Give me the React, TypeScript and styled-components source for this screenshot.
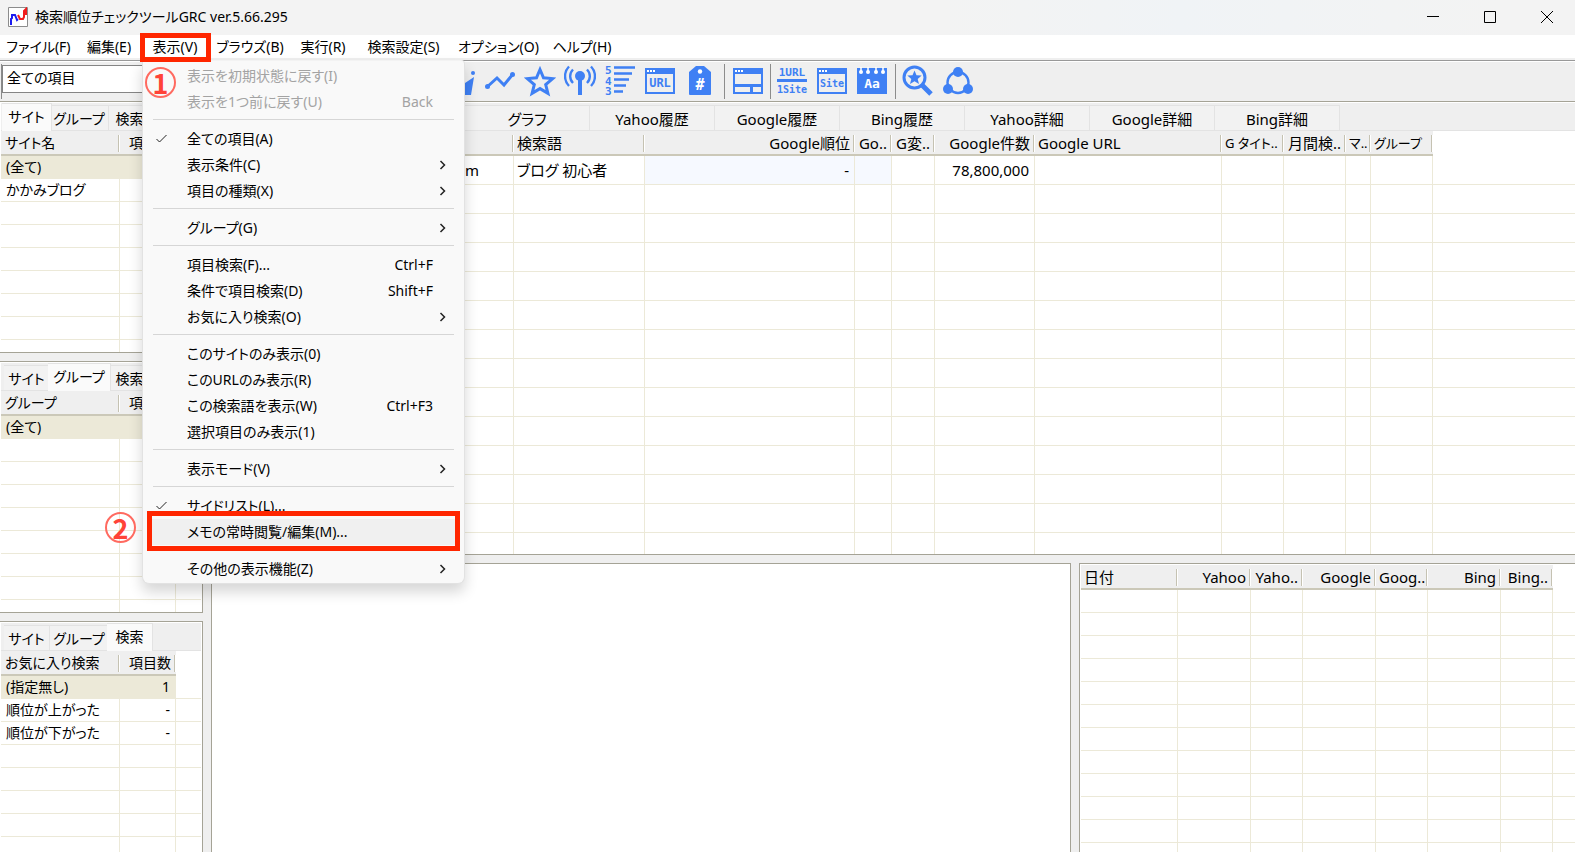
import React from 'react';
import styled, { createGlobalStyle, css } from 'styled-components';

const GlobalStyle = createGlobalStyle`
  *, *::before, *::after { box-sizing: border-box; }
  html, body { margin: 0; padding: 0; }
  body, button, select {
    font-family: 'Noto Sans', 'Noto Sans CJK JP', sans-serif;
    font-size: 14px;
    font-feature-settings: 'palt';
    color: #000;
  }
  button { border: 0; padding: 0; background: none; }
`;

const LINE = '#ece9d8';
const EDGE = '#a5a396';
const FACE = '#efefef';
const BLUE = '#3f80f4';
const RED = '#ff2600';

const Window = styled.div`
  position: relative;
  display: flex;
  flex-direction: column;
  height: 100vh;
  overflow: hidden;
  background: ${FACE};
`;

/* ---------- title bar ---------- */

const TitleBar = styled.header`
  display: flex;
  align-items: center;
  flex: none;
  height: 35px;
  padding: 0 0 2px 8px;
  background: linear-gradient(90deg, #f3f3f3 60%, #f0f3f6 75%, #f3f3f3 95%);
`;

const TitleText = styled.h1`
  flex: 1;
  margin: 0 0 0 7px;
  font-size: 14px;
  font-weight: 400;
  line-height: 20px;
  white-space: pre;
`;

const CaptionButton = styled.button`
  display: flex;
  align-items: center;
  justify-content: center;
  width: 57px;
  height: 31px;
`;

/* ---------- menu bar ---------- */

const MenuBar = styled.nav`
  display: flex;
  flex: none;
  height: 23px;
  background: #fff;
`;

const MenuButton = styled.button<{ $width: number }>`
  width: ${(p) => p.$width}px;
  height: 23px;
  line-height: 20px;
  white-space: nowrap;
`;

/* ---------- tool bar ---------- */

const ToolBar = styled.div`
  display: flex;
  flex: none;
  align-items: center;
  height: 41px;
  margin-top: 2px;
  padding-left: 1px;
  border-top: 1px solid #999;
  box-shadow: inset 0 1px 0 #fff;
`;

const FilterBox = styled.div`
  width: 439px;
  height: 35px;
  border-left: 1px solid #8a8a8a;
`;

const FilterSelect = styled.select`
  display: block;
  width: 400px;
  height: 28px;
  margin-top: 1px;
  padding: 0 4px 2px;
  appearance: none;
  border: 1px solid #858585;
  border-radius: 0;
  background: #fff;
`;

const ToolButton = styled.button`
  display: flex;
  align-items: center;
  justify-content: center;
  width: 40px;
  height: 36px;
`;

const ToolDivider = styled.span<{ $width: number }>`
  width: ${(p) => p.$width}px;
  height: 35px;
  background: linear-gradient(#8c8c8c, #8c8c8c) center / 1px 100% no-repeat;
`;

/* ---------- panes ---------- */

const Workspace = styled.main`
  display: flex;
  flex: 1;
  gap: 8px;
  min-height: 0;
`;

const SideColumn = styled.aside`
  display: grid;
  grid-template-rows: 252px 252px minmax(0, 1fr);
  gap: 8px;
  flex: none;
  width: 203px;
`;

const MainColumn = styled.div`
  display: grid;
  grid-template-rows: 454px minmax(0, 1fr);
  gap: 8px;
  flex: 1;
  min-width: 0;
`;

type Edges = 'side' | 'main' | 'closed';

const Pane = styled.section<{ $edges: Edges }>`
  min-width: 0;
  min-height: 0;
  overflow: hidden;
  padding: 1px 1px 0;
  border: 1px solid ${EDGE};
  background: #fff;
  ${(p) =>
    p.$edges === 'side' &&
    css`
      border-left: 0;
      &:last-child { border-bottom: 0; }
    `}
  ${(p) =>
    p.$edges === 'main' &&
    css`
      border-right: 0;
      padding-right: 0;
    `}
`;

const BottomRow = styled.div`
  display: grid;
  grid-template-columns: minmax(0, 1fr) 496px;
  gap: 8px;
  min-height: 0;
  > ${Pane} { border-bottom: 0; }
`;

const TabStrip = styled.div<{ $indent: number }>`
  display: flex;
  align-items: flex-end;
  height: 28px;
  padding-left: ${(p) => p.$indent}px;
  border-bottom: 1px solid #e3e3e3;
  background: ${FACE};
`;

const Tab = styled.button<{ $width: number; $active?: boolean; $large?: boolean }>`
  flex: none;
  width: ${(p) => p.$width}px;
  height: 25px;
  padding-top: 2px;
  border: solid #e3e3e3;
  border-width: 1px 1px 0 0;
  background: #f2f2f2;
  font-size: ${(p) => (p.$large ? 15 : 14)}px;
  line-height: 22px;
  white-space: nowrap;
  ${(p) =>
    p.$active &&
    css`
      position: relative;
      width: ${p.$width + 4}px;
      height: 28px;
      margin: 0 -2px -1px;
      padding-bottom: 4px;
      background: #fafafa;
    `}
`;

/* ---------- grids ---------- */

const Grid = styled.table<{ $large?: boolean }>`
  width: 100%;
  table-layout: fixed;
  border-collapse: separate;
  border-spacing: 0;
  font-size: ${(p) => (p.$large ? 15 : 14)}px;
  line-height: 20px;
  white-space: nowrap;
  th { padding: 1px 5px 0 ${(p) => (p.$large ? 3 : 4)}px; }
  td { padding: 0 5px 0 ${(p) => (p.$large ? 3 : 5)}px; }
`;

type Align = 'left' | 'right';

const HeadCell = styled.th<{ $align?: Align; $dense?: boolean }>`
  height: 25px;
  border-bottom: 2px solid #cbc8b8;
  background:
    linear-gradient(#c5c2b2, #c5c2b2) right 1px top 4px / 1px 17px no-repeat,
    linear-gradient(#fff, #fff) right 0 top 4px / 1px 17px no-repeat,
    ${FACE};
  font-size: ${(p) => (p.$dense ? '13px' : 'inherit')};
  font-weight: 400;
  text-align: ${(p) => p.$align ?? 'left'};
`;

const Row = styled.tr<{ $height: number }>`
  height: ${(p) => p.$height}px;
`;

const Cell = styled.td<{ $align?: Align; $tone?: string }>`
  height: inherit;
  border: solid ${LINE};
  border-width: 0 1px 1px 0;
  background: ${(p) => p.$tone ?? '#fff'};
  text-align: ${(p) => p.$align ?? 'left'};
  &:last-child { border-right: 0; }
`;

type Column = { label: string; width: number; align?: Align; dense?: boolean; tone?: string };

function DataGrid({
  columns,
  rows,
  count,
  rowHeight,
  large,
  selected,
}: {
  columns: Column[];
  rows: string[][];
  count: number;
  rowHeight: number;
  large?: boolean;
  selected?: number;
}) {
  return (
    <Grid $large={large}>
      <colgroup>
        {columns.map((c, i) => (
          <col key={i} width={c.width} />
        ))}
        <col />
      </colgroup>
      <thead>
        <tr>
          {columns.map((c, i) => (
            <HeadCell key={i} scope="col" $align={c.align} $dense={c.dense}>
              {c.label}
            </HeadCell>
          ))}
          <td />
        </tr>
      </thead>
      <tbody>
        {Array.from({ length: count }, (_, r) => (
          <Row key={r} $height={rowHeight}>
            {columns.map((c, i) => (
              <Cell
                key={i}
                $align={c.align}
                $tone={r === selected ? LINE : r === 0 ? c.tone : undefined}
              >
                {rows[r]?.[i] ?? ''}
              </Cell>
            ))}
            <Cell />
          </Row>
        ))}
      </tbody>
    </Grid>
  );
}

const SIDE_TABS = [
  { label: 'サイト', width: 46 },
  { label: 'グループ', width: 59 },
  { label: '検索', width: 42 },
];

function SidePane({ active, title, rows }: { active: number; title: string; rows: string[][] }) {
  return (
    <Pane $edges="side">
      <TabStrip $indent={3} role="tablist">
        {SIDE_TABS.map((t, i) => (
          <Tab key={t.label} role="tab" aria-selected={i === active} $width={t.width} $active={i === active}>
            {t.label}
          </Tab>
        ))}
      </TabStrip>
      <DataGrid
        columns={[
          { label: title, width: 119 },
          { label: '項目数', width: 56, align: 'right' },
        ]}
        rows={rows}
        count={9}
        rowHeight={23}
        selected={0}
      />
    </Pane>
  );
}

const MAIN_TABS = ['グラフ', 'Yahoo履歴', 'Google履歴', 'Bing履歴', 'Yahoo詳細', 'Google詳細', 'Bing詳細'];

const MAIN_COLUMNS: Column[] = [
  { label: '', width: 249 },
  { label: '', width: 52 },
  { label: '検索語', width: 131 },
  { label: 'Google順位', width: 210, align: 'right', tone: '#f6f9ff' },
  { label: 'Go..', width: 37, align: 'right', tone: '#f6f9ff' },
  { label: 'G変..', width: 43, align: 'right' },
  { label: 'Google件数', width: 100, align: 'right' },
  { label: 'Google URL', width: 187 },
  { label: 'G タイト..', width: 62, dense: true },
  { label: '月間検..', width: 62, align: 'right' },
  { label: 'マ..', width: 25, dense: true },
  { label: 'グループ', width: 62, dense: true },
];

const HISTORY_COLUMNS: Column[] = [
  { label: '日付', width: 97 },
  { label: 'Yahoo', width: 73, align: 'right' },
  { label: 'Yaho..', width: 52, align: 'right' },
  { label: 'Google', width: 73, align: 'right' },
  { label: 'Goog..', width: 52, align: 'right' },
  { label: 'Bing', width: 73, align: 'right' },
  { label: 'Bing..', width: 52, align: 'right' },
];

/* ---------- drop-down menu ---------- */

const Menu = styled.div`
  position: absolute;
  left: 142px;
  top: 60px;
  width: 323px;
  padding: 2px 0 1px;
  border: 1px solid #e2e2e2;
  border-top-color: #f3f3f3;
  border-radius: 0 4px 7px 7px;
  background: #f9f9f9;
  box-shadow: 0 8px 14px rgba(0, 0, 0, 0.16);
`;

const MenuItem = styled.button<{ $hot?: boolean }>`
  display: grid;
  grid-template-columns: 31px 1fr auto 21px;
  align-items: center;
  width: 313px;
  height: 26px;
  margin: 0 4px;
  padding: 0 0 1px 9px;
  border-radius: 4px;
  background: ${(p) => (p.$hot ? '#f0f0f0' : 'transparent')};
  line-height: 20px;
  text-align: left;
  white-space: nowrap;
  &:disabled { color: #a3a3a3; }
`;

const Shortcut = styled.span`
  margin-right: 6px;
`;

const MenuRule = styled.hr`
  height: 1px;
  margin: 4px 10px 6px;
  border: 0;
  background: #d6d6d6;
`;

type Entry = { label: string; keys?: string; sub?: boolean; checked?: boolean; off?: boolean; hot?: boolean };

const MENU_GROUPS: Entry[][] = [
  [
    { label: '表示を初期状態に戻す(I)', off: true },
    { label: '表示を1つ前に戻す(U)', keys: 'Back', off: true },
  ],
  [
    { label: '全ての項目(A)', checked: true },
    { label: '表示条件(C)', sub: true },
    { label: '項目の種類(X)', sub: true },
  ],
  [{ label: 'グループ(G)', sub: true }],
  [
    { label: '項目検索(F)...', keys: 'Ctrl+F' },
    { label: '条件で項目検索(D)', keys: 'Shift+F' },
    { label: 'お気に入り検索(O)', sub: true },
  ],
  [
    { label: 'このサイトのみ表示(0)' },
    { label: 'このURLのみ表示(R)' },
    { label: 'この検索語を表示(W)', keys: 'Ctrl+F3' },
    { label: '選択項目のみ表示(1)' },
  ],
  [{ label: '表示モード(V)', sub: true }],
  [
    { label: 'サイドリスト(L)...', checked: true },
    { label: 'メモの常時閲覧/編集(M)...', hot: true },
  ],
  [{ label: 'その他の表示機能(Z)', sub: true }],
];

/* ---------- callouts over the window ---------- */

const Frame = styled.div<{ $x: number; $y: number; $w: number; $h: number }>`
  position: absolute;
  left: ${(p) => p.$x}px;
  top: ${(p) => p.$y}px;
  width: ${(p) => p.$w}px;
  height: ${(p) => p.$h}px;
  border: 5px solid ${RED};
  pointer-events: none;
`;

const StepBadge = styled.div<{ $x: number; $y: number }>`
  position: absolute;
  left: ${(p) => p.$x}px;
  top: ${(p) => p.$y}px;
  width: 31px;
  height: 31px;
  border: 2px solid #ff6a60;
  border-radius: 50%;
  color: #ff4338;
  font: 700 27px/27px 'Noto Sans CJK JP', sans-serif;
  text-align: center;
`;

/* ---------- drawings ---------- */

const Glyph = styled.svg`
  display: block;
  fill: ${BLUE};
  stroke: none;
  text {
    font-family: 'DejaVu Sans Mono', monospace;
    font-weight: 700;
  }
`;

const Icon = ({ children }: { children: React.ReactNode }) => (
  <Glyph width="32" height="32" viewBox="0 0 32 32" aria-hidden="true">
    {children}
  </Glyph>
);

const stroke = { fill: 'none', stroke: BLUE };

const WindowShape = () => (
  <>
    <path {...stroke} strokeWidth="2" d="M2 4h28v24H2z" />
    <path d="M1 3h30v6H1z" />
    <path fill="#fff" d="M3 5h2v2H3zM6 5h2v2H6zM9 5h2v2H9z" />
  </>
);

const CaptionIcon = ({ d }: { d: string }) => (
  <svg width="14" height="14" viewBox="0 0 14 14" fill="none" stroke="#000" aria-hidden="true">
    <path d={d} />
  </svg>
);

type Tool = { name: string; art: React.ReactNode } | { gap: number };

const TOOLS: Tool[] = [
  {
    name: '順位グラフ',
    art: (
      <>
        <path d="M3 30 2 14l7 5 7-10 5 9 9-6-3 18z" />
        <circle cx="29" cy="8" r="2" />
      </>
    ),
  },
  {
    name: '折れ線',
    art: (
      <>
        <path {...stroke} strokeWidth="3" d="M3 22 13 13l7 7L29 9" />
        <circle cx="3.500" cy="21.500" r="2.500" />
        <circle cx="28.500" cy="9.500" r="2.500" />
      </>
    ),
  },
  {
    name: 'お気に入り',
    art: (
      <path
        {...stroke}
        strokeWidth="3"
        d="m16 4.500 3.500 8.300 9.200.8-7 6 2.200 8.700-7.900-4.700-7.900 4.700 2.200-8.700-7-6 9.200-.8z"
      />
    ),
  },
  {
    name: '発信',
    art: (
      <>
        <circle cx="16" cy="11" r="5" />
        <path d="M14 14h4v16h-4z" />
        <path {...stroke} strokeWidth="2.400" d="M9 4.500a9.500 9.500 0 0 0 0 13.500M23 4.500a9.500 9.500 0 0 1 0 13.500M5 1.500a14 14 0 0 0 0 19.500M27 1.500a14 14 0 0 1 0 19.500" />
      </>
    ),
  },
  {
    name: '順位',
    art: (
      <>
        <text x="1" y="9" fontSize="11">5</text>
        <text x="1" y="20" fontSize="11">4</text>
        <text x="1" y="30" fontSize="11">3</text>
        <path {...stroke} strokeWidth="2.400" d="M10 2.500h21M10 8.500h18M10 14.500h15M10 20.500h12M10 26.500h9" />
      </>
    ),
  },
  {
    name: 'URL',
    art: (
      <>
        <WindowShape />
        <text x="16" y="22" fontSize="12" textAnchor="middle">URL</text>
      </>
    ),
  },
  {
    name: 'タグ',
    art: (
      <>
        <path d="M12 1h8l7 6v22q0 1-1 1H6q-1 0-1-1V7z" />
        <circle cx="16" cy="6.500" r="2.200" fill="#fff" />
        <text x="16" y="25" fontSize="15" textAnchor="middle" fill="#fff">#</text>
      </>
    ),
  },
  { gap: 8 },
  {
    name: '画面分割',
    art: (
      <>
        <WindowShape />
        <path d="M2 19h28v3H2zM18 21h3v7h-3z" />
      </>
    ),
  },
  { gap: 4 },
  {
    name: '1URL 1Site',
    art: (
      <>
        <text x="16" y="11" fontSize="11" textAnchor="middle">1URL</text>
        <path d="M1 14h30v3H1z" />
        <text x="16" y="28" fontSize="10" textAnchor="middle">1Site</text>
      </>
    ),
  },
  {
    name: 'Site',
    art: (
      <>
        <WindowShape />
        <text x="16" y="22" fontSize="10" textAnchor="middle">Site</text>
      </>
    ),
  },
  {
    name: '文字',
    art: (
      <>
        <path d="M1 3h30v26H1z" />
        <path stroke="#fff" strokeWidth="1.500" d="M5 2v5M12 2v5M20 2v5M27 2v5" />
        <g fill="#fff">
          <circle cx="5" cy="7" r="2" />
          <circle cx="12" cy="7" r="2" />
          <circle cx="20" cy="7" r="2" />
          <circle cx="27" cy="7" r="2" />
        </g>
        <text x="16" y="23" fontSize="13" textAnchor="middle" fill="#fff">Aa</text>
      </>
    ),
  },
  { gap: 6 },
  {
    name: 'お気に入り検索',
    art: (
      <>
        <circle {...stroke} strokeWidth="3" cx="12.500" cy="12.500" r="10.500" />
        <path {...stroke} strokeWidth="5" d="m20 20 9 9" />
        <path d="m12.500 5.500 2 4.700 5.200.4-4 3.300 1.300 5-4.500-2.700L8 18.900l1.300-5-4-3.300 5.200-.4z" />
      </>
    ),
  },
  {
    name: '共有',
    art: (
      <>
        <circle {...stroke} strokeWidth="2.400" cx="16" cy="17.500" r="10.500" />
        <circle cx="16" cy="7" r="5" />
        <circle cx="6" cy="24" r="5" />
        <circle cx="26" cy="24" r="5" />
      </>
    ),
  },
];

const MENU_BAR: [string, number][] = [
  ['ファイル(F)', 77],
  ['編集(E)', 64],
  ['表示(V)', 68],
  ['ブラウズ(B)', 82],
  ['実行(R)', 64],
  ['検索設定(S)', 97],
  ['オプション(O)', 93],
  ['ヘルプ(H)', 74],
];

export default function App() {
  return (
    <Window>
      <GlobalStyle />
      <TitleBar>
        <svg width="20" height="20" viewBox="0 0 20 20" fill="none" aria-hidden="true">
          <path fill="#fff" stroke="#8c8c8c" d="M.5.5h19v19H.5z" />
          <path stroke="#1c1cf0" strokeWidth="2" d="M3 18v-6l1-1V8h3l2 5 1-1" />
          <path stroke="#f01c1c" strokeWidth="2" d="m10 8 2 4h3l1-2V4l2-2v6" />
        </svg>
        <TitleText>検索順位チェックツールGRC ver.5.66.295</TitleText>
        <CaptionButton aria-label="最小化">
          <CaptionIcon d="M1 6.500h12" />
        </CaptionButton>
        <CaptionButton aria-label="最大化">
          <CaptionIcon d="M1.500 1.500h11v11h-11z" />
        </CaptionButton>
        <CaptionButton aria-label="閉じる">
          <CaptionIcon d="m1 1 12 12M13 1 1 13" />
        </CaptionButton>
      </TitleBar>

      <MenuBar>
        {MENU_BAR.map(([label, width]) => (
          <MenuButton key={label} $width={width}>
            {label}
          </MenuButton>
        ))}
      </MenuBar>

      <ToolBar>
        <FilterBox>
          <FilterSelect aria-label="表示項目">
            <option>全ての項目</option>
          </FilterSelect>
        </FilterBox>
        {TOOLS.map((t, i) =>
          'gap' in t ? (
            <ToolDivider key={i} $width={t.gap} />
          ) : (
            <ToolButton key={i} aria-label={t.name}>
              <Icon>{t.art}</Icon>
            </ToolButton>
          ),
        )}
      </ToolBar>

      <Workspace>
        <SideColumn>
          <SidePane active={0} title="サイト名" rows={[['(全て)'], ['かかみブログ']]} />
          <SidePane active={1} title="グループ" rows={[['(全て)']]} />
          <SidePane
            active={2}
            title="お気に入り検索"
            rows={[
              ['(指定無し)', '1'],
              ['順位が上がった', '-'],
              ['順位が下がった', '-'],
            ]}
          />
        </SideColumn>

        <MainColumn>
          <Pane $edges="main">
            <TabStrip $indent={252} role="tablist">
              {MAIN_TABS.map((label) => (
                <Tab key={label} role="tab" $width={125} $large>
                  {label}
                </Tab>
              ))}
            </TabStrip>
            <DataGrid
              large
              columns={MAIN_COLUMNS}
              rows={[['', 'm', 'ブログ 初心者', '-', '', '', '78,800,000']]}
              count={14}
              rowHeight={29}
            />
          </Pane>
          <BottomRow>
            <Pane $edges="closed" />
            <Pane $edges="main">
              <DataGrid large columns={HISTORY_COLUMNS} rows={[]} count={12} rowHeight={23} />
            </Pane>
          </BottomRow>
        </MainColumn>
      </Workspace>

      <Menu role="menu">
        {MENU_GROUPS.map((group, g) => (
          <React.Fragment key={g}>
            {g > 0 && <MenuRule />}
            {group.map((e) => (
              <MenuItem key={e.label} role="menuitem" disabled={e.off} $hot={e.hot}>
                <span>
                  {e.checked && (
                    <svg width="11" height="11" viewBox="0 0 11 11" fill="none" stroke="#222" aria-hidden="true">
                      <path d="m.5 6 3 3 7-7" />
                    </svg>
                  )}
                </span>
                <span>{e.label}</span>
                <Shortcut>{e.keys}</Shortcut>
                <span>
                  {e.sub && (
                    <svg width="8" height="10" viewBox="0 0 8 10" fill="none" stroke="#222" strokeWidth="1.500" aria-hidden="true">
                      <path d="m1.500 1 4 4-4 4" />
                    </svg>
                  )}
                </span>
              </MenuItem>
            ))}
          </React.Fragment>
        ))}
      </Menu>

      <Frame $x={140} $y={33} $w={71} $h={29} />
      <Frame $x={147} $y={511} $w={313} $h={40} />
      <StepBadge $x={145} $y={67}>1</StepBadge>
      <StepBadge $x={105} $y={512}>2</StepBadge>
    </Window>
  );
}
